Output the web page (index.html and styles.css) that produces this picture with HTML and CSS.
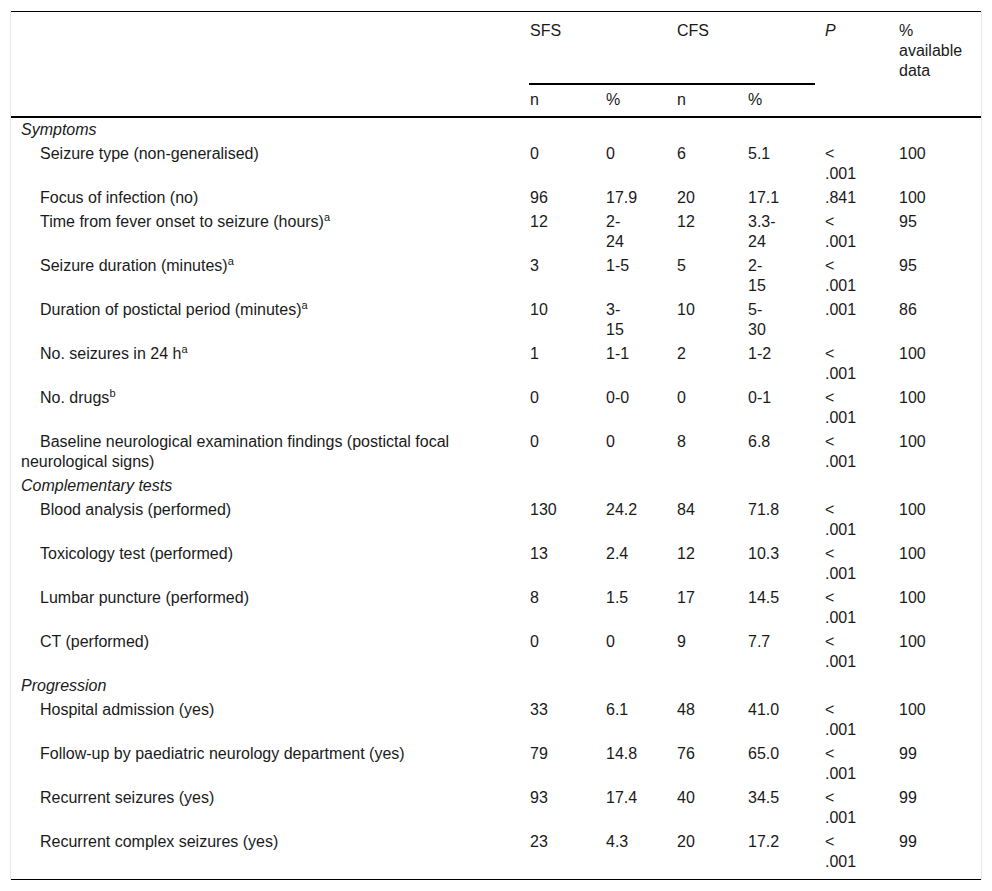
FILE: index.html
```html
<!DOCTYPE html>
<html lang="en">
<head>
<meta charset="utf-8">
<title>Table</title>
<link rel="stylesheet" href="styles.css">
</head>
<body>
<div class="wrap">
<table class="tbl">
<colgroup>
<col class="c-label"><col class="c-n1"><col class="c-p1"><col class="c-n2"><col class="c-p2"><col class="c-pv"><col class="c-av">
</colgroup>
<thead>
<tr class="h1">
<th rowspan="2" class="span lblh"></th>
<th colspan="2" class="grp num">SFS</th>
<th colspan="2" class="grp num">CFS</th>
<th rowspan="2" class="span pv"><i>P</i></th>
<th rowspan="2" class="span av">% available data</th>
</tr>
<tr class="h2">
<th class="num">n</th><th class="num pct1">%</th><th class="num">n</th><th class="num pct2">%</th>
</tr>
</thead>
<tbody>
<tr class="sec"><td colspan="7"><i>Symptoms</i></td></tr>
<tr><td class="lbl">Seizure type (non-generalised)</td><td class="num">0</td><td class="num pct1">0</td><td class="num">6</td><td class="num pct2">5.1</td><td class="pv">&lt; .001</td><td class="av">100</td></tr>
<tr><td class="lbl">Focus of infection (no)</td><td class="num">96</td><td class="num pct1">17.9</td><td class="num">20</td><td class="num pct2">17.1</td><td class="pv">.841</td><td class="av">100</td></tr>
<tr><td class="lbl">Time from fever onset to seizure (hours)<sup>a</sup></td><td class="num">12</td><td class="num pct1">2-24</td><td class="num">12</td><td class="num pct2">3.3-24</td><td class="pv">&lt; .001</td><td class="av">95</td></tr>
<tr><td class="lbl">Seizure duration (minutes)<sup>a</sup></td><td class="num">3</td><td class="num pct1">1-5</td><td class="num">5</td><td class="num pct2">2-15</td><td class="pv">&lt; .001</td><td class="av">95</td></tr>
<tr><td class="lbl">Duration of postictal period (minutes)<sup>a</sup></td><td class="num">10</td><td class="num pct1">3-15</td><td class="num">10</td><td class="num pct2">5-30</td><td class="pv">.001</td><td class="av">86</td></tr>
<tr><td class="lbl">No. seizures in 24 h<sup>a</sup></td><td class="num">1</td><td class="num pct1">1-1</td><td class="num">2</td><td class="num pct2">1-2</td><td class="pv">&lt; .001</td><td class="av">100</td></tr>
<tr><td class="lbl">No. drugs<sup>b</sup></td><td class="num">0</td><td class="num pct1">0-0</td><td class="num">0</td><td class="num pct2">0-1</td><td class="pv">&lt; .001</td><td class="av">100</td></tr>
<tr><td class="lbl">Baseline neurological examination findings (postictal focal neurological signs)</td><td class="num">0</td><td class="num pct1">0</td><td class="num">8</td><td class="num pct2">6.8</td><td class="pv">&lt; .001</td><td class="av">100</td></tr>
<tr class="sec"><td colspan="7"><i>Complementary tests</i></td></tr>
<tr><td class="lbl">Blood analysis (performed)</td><td class="num">130</td><td class="num pct1">24.2</td><td class="num">84</td><td class="num pct2">71.8</td><td class="pv">&lt; .001</td><td class="av">100</td></tr>
<tr><td class="lbl">Toxicology test (performed)</td><td class="num">13</td><td class="num pct1">2.4</td><td class="num">12</td><td class="num pct2">10.3</td><td class="pv">&lt; .001</td><td class="av">100</td></tr>
<tr><td class="lbl">Lumbar puncture (performed)</td><td class="num">8</td><td class="num pct1">1.5</td><td class="num">17</td><td class="num pct2">14.5</td><td class="pv">&lt; .001</td><td class="av">100</td></tr>
<tr><td class="lbl">CT (performed)</td><td class="num">0</td><td class="num pct1">0</td><td class="num">9</td><td class="num pct2">7.7</td><td class="pv">&lt; .001</td><td class="av">100</td></tr>
<tr class="sec"><td colspan="7"><i>Progression</i></td></tr>
<tr><td class="lbl">Hospital admission (yes)</td><td class="num">33</td><td class="num pct1">6.1</td><td class="num">48</td><td class="num pct2">41.0</td><td class="pv">&lt; .001</td><td class="av">100</td></tr>
<tr><td class="lbl">Follow-up by paediatric neurology department (yes)</td><td class="num">79</td><td class="num pct1">14.8</td><td class="num">76</td><td class="num pct2">65.0</td><td class="pv">&lt; .001</td><td class="av">99</td></tr>
<tr><td class="lbl">Recurrent seizures (yes)</td><td class="num">93</td><td class="num pct1">17.4</td><td class="num">40</td><td class="num pct2">34.5</td><td class="pv">&lt; .001</td><td class="av">99</td></tr>
<tr class="last"><td class="lbl">Recurrent complex seizures (yes)</td><td class="num">23</td><td class="num pct1">4.3</td><td class="num">20</td><td class="num pct2">17.2</td><td class="pv">&lt; .001</td><td class="av">99</td></tr>
</tbody>
</table>
</div>
</body>
</html>
```
FILE: styles.css
```css
body {
  margin: 10px 10px 0;
  background: #fff;
  color: #1a1a1a;
  font-family: "Liberation Sans", Arial, sans-serif;
  font-size: 16px;
  line-height: 20px;
}

.wrap {
  width: 970px;
  padding-top: 1px;
  border-left: 1px solid #e6e6e6;
  border-right: 1px solid #e6e6e6;
}

.tbl {
  width: 970px;
  table-layout: fixed;
  border-collapse: separate;
  border-spacing: 0;
  border-top: 1px solid #000;
  border-bottom: 1px solid #000;
}

.c-label { width: 518px; }
.c-n1 { width: 76px; }
.c-p1 { width: 71px; }
.c-n2 { width: 71px; }
.c-p2 { width: 68px; }
.c-pv { width: 74px; }
.c-av { width: 92px; }

th {
  font-weight: normal;
  text-align: left;
  vertical-align: top;
  padding: 0 10px;
}

.h1 .grp {
  padding-top: 9px;
  padding-bottom: 42px;
  border-bottom: 2px solid #000;
}

.h1 .span {
  padding-top: 9px;
  border-bottom: 2px solid #000;
}

.h2 th {
  padding-top: 5px;
  padding-bottom: 6px;
  border-bottom: 2px solid #000;
}

td {
  text-align: left;
  vertical-align: top;
  padding: 2px 10px;
}

.num {
  padding-left: 1px;
  padding-right: 8px;
}

.pct1 { padding-right: 38.5px; }
.pct2 { padding-right: 35.5px; }
.pv { padding-left: 10px; padding-right: 28px; }
.av { padding-left: 10px; padding-right: 10px; }

.lbl {
  padding-left: 10px;
  padding-right: 8px;
  text-indent: 19px;
}

.sec td {
  padding-left: 10px;
}

.last td {
  padding-bottom: 7px;
}

sup {
  font-size: 11px;
  line-height: 0;
  vertical-align: 6px;
}
```
